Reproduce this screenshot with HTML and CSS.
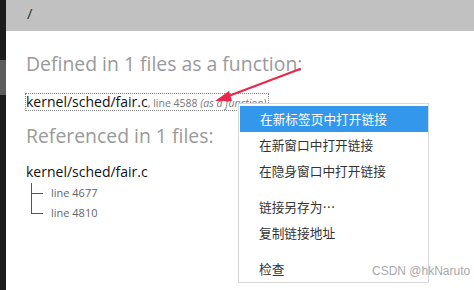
FILE: index.html
```html
<!DOCTYPE html>
<html>
<head>
<meta charset="utf-8">
<link rel="stylesheet" href="styles.css">
</head>
<body>
<div class="frame">
  <div class="strip"><div class="strip-mark"></div></div>
  <div class="main">
    <div class="topbar"><span class="slash">/</span></div>
    <div class="content">
      <h2 class="heading first">Defined in 1 files as a function:</h2>
      <div class="defline"><a class="file">kernel/sched/fair.c</a><span class="meta">, line 4588 <i>(as a function)</i></span></div>
      <h2 class="heading second">Referenced in 1 files:</h2>
      <div class="file ref">kernel/sched/fair.c</div>
      <ul class="tree">
        <li class="mid">line 4677</li>
        <li class="last">line 4810</li>
      </ul>
    </div>
  </div>
</div>
<svg class="arrow" width="474" height="290" viewBox="0 0 474 290">
  <line x1="300" y1="69" x2="226" y2="97" stroke="#e8274a" stroke-width="2" stroke-linecap="round"/>
  <polygon points="215,101 229,91 232,101" fill="#e8274a"/>
</svg>
<div class="menu">
  <div class="item active">在新标签页中打开链接</div>
  <div class="item">在新窗口中打开链接</div>
  <div class="item">在隐身窗口中打开链接</div>
  <div class="sep"></div>
  <div class="item">链接另存为…</div>
  <div class="item">复制链接地址</div>
  <div class="sep"></div>
  <div class="item">检查</div>
</div>
<div class="watermark">CSDN @hkNaruto</div>
</body>
</html>
```
FILE: styles.css
```css
html, body {
  margin: 0;
  padding: 0;
  width: 474px;
  height: 290px;
  overflow: hidden;
  background: #ffffff;
  font-family: "Open Sans", "Noto Sans", sans-serif;
}
.frame {
  display: flex;
  width: 474px;
  height: 290px;
}
.strip {
  width: 6px;
  background: #1c1c1c;
  padding-top: 60px;
  box-sizing: border-box;
}
.strip-mark {
  height: 35px;
  background: #5c5c5c;
}
.main {
  flex: 1;
  display: flex;
  flex-direction: column;
}
.topbar {
  height: 31px;
  background: #c1c1c1;
  padding-left: 21px;
  box-sizing: border-box;
}
.slash {
  display: block;
  font-size: 15px;
  line-height: 26px;
  color: #333;
}
.content {
  padding-left: 20px;
}
.heading {
  margin: 0;
  font-weight: normal;
  font-size: 19.4px;
  color: #9a9a9a;
  line-height: 26px;
}
.heading.first {
  margin-top: 20px;
}
.heading.second {
  margin-top: 11px;
}
.defline {
  margin-top: 17px;
  display: inline-block;
  outline: 1px dotted #888;
  line-height: 14px;
  padding-right: 2px;
}
.file {
  font-size: 14px;
  color: #111;
  text-decoration: none;
}
.meta {
  font-size: 10.5px;
  color: #777;
}
.ref {
  margin-top: 14px;
  line-height: 18px;
}
.tree {
  list-style: none;
  margin: 2px 0 0 5px;
  padding: 0;
}
.tree li {
  position: relative;
  padding-left: 20px;
  font-size: 11px;
  color: #666;
  line-height: 20px;
}
.tree li::before {
  content: "";
  position: absolute;
  left: 0;
  top: 0;
  border-left: 1px solid #555;
  height: 20px;
}
.tree li.last::before {
  height: 10px;
}
.tree li::after {
  content: "";
  position: absolute;
  left: 0;
  top: 10px;
  width: 12px;
  border-top: 1px solid #555;
}
.arrow {
  position: absolute;
  left: 0;
  top: 0;
}
.menu {
  position: absolute;
  left: 238px;
  top: 103px;
  width: 191px;
  height: 180px;
  box-sizing: border-box;
  background: #fff;
  border: 1px solid #d8d8d8;
  padding-top: 2px;
  font-family: "Noto Sans CJK SC", sans-serif;
}
.item {
  height: 26px;
  line-height: 26px;
  padding-left: 20px;
  font-size: 12.7px;
  color: #333;
}
.item.active {
  background: #3398ec;
  color: #fff;
  margin-left: 1px;
}
.sep {
  height: 10px;
}
.watermark {
  position: absolute;
  left: 372px;
  top: 264px;
  font-family: "Liberation Sans", Arial, sans-serif;
  font-size: 12px;
  color: #a8a8a8;
}
```
